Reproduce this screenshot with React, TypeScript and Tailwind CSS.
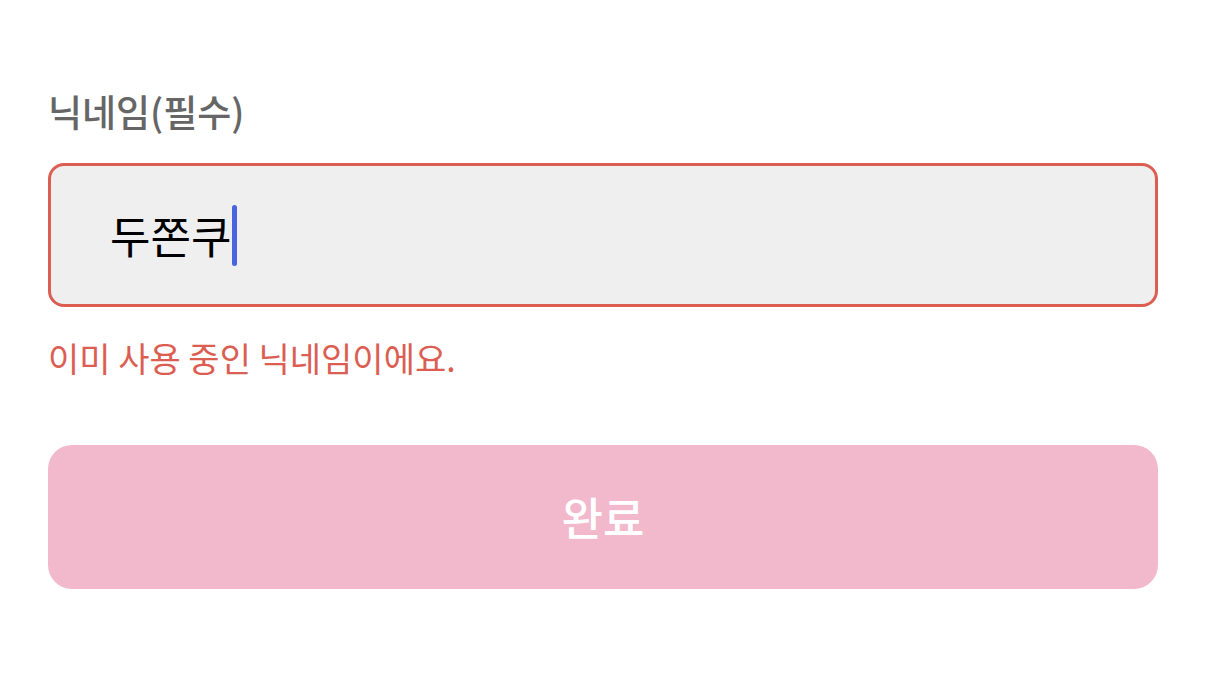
const App = () => {
  return (
    <div
      className="w-[1206px] h-[692px] bg-white px-12 pt-[88px]"
      style={{ fontFamily: '"Noto Sans CJK KR", "Noto Sans", sans-serif' }}>
      <label className="block text-[37px] leading-[46px] font-medium text-[#666666]">닉네임(필수)</label>
      <div className="mt-[29px] h-[144px] rounded-[16px] border-[3px] border-[#dc5e52] bg-[#efefef] flex items-center pl-[59px]">
        <span className="text-[44px] leading-none text-black">두쫀쿠</span>
        <span className="ml-[1px] w-[5px] h-[61px] rounded-full bg-[#4a63e0]" />
      </div>
      <p className="mt-[31px] text-[34px] leading-[40px] text-[#dc5e52]">이미 사용 중인 닉네임이에요.</p>
      <button className="mt-[67px] w-full h-[144px] rounded-[24px] bg-[#f2b9cd] text-white text-[45px] font-medium">
        완료
      </button>
    </div>
  );
};

export default App;
